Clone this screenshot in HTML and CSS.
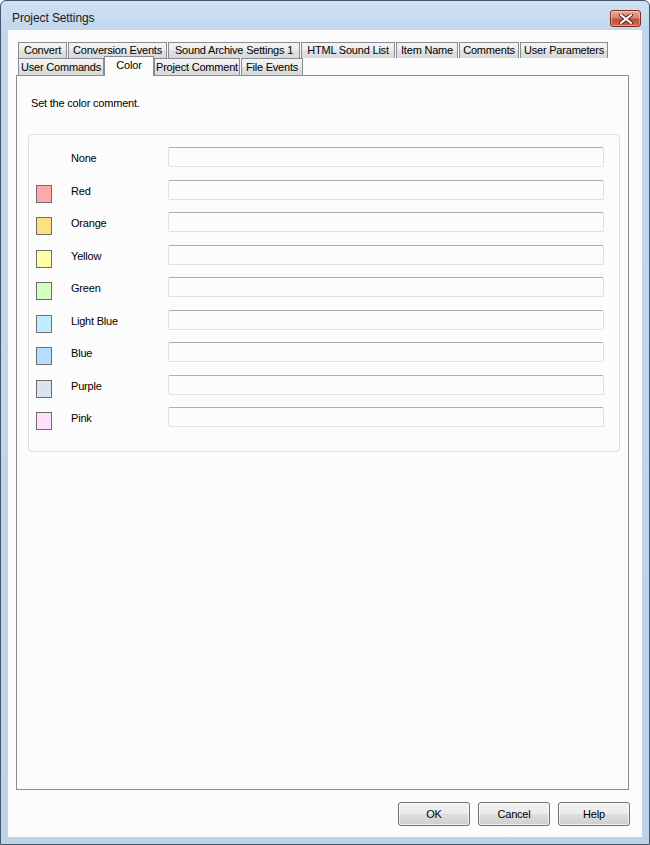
FILE: index.html
```html
<!DOCTYPE html>
<html>
<head>
<meta charset="utf-8">
<link rel="stylesheet" href="styles.css">
</head>
<body>
<div class="window">
  <div class="titlebar">
    <span class="title">Project Settings</span>
    <span class="close"><svg width="14" height="10" viewBox="0 0 14 10"><path d="M2 1 L12 9 M12 1 L2 9" stroke="#5a2020" stroke-width="4" stroke-linecap="square"/><path d="M2 1 L12 9 M12 1 L2 9" stroke="#ffffff" stroke-width="2" stroke-linecap="square"/></svg></span>
  </div>
  <div class="client">
    <div class="tabstrip">
      <div class="tabrow back">
        <div class="tab w49">Convert</div>
        <div class="tab w99">Conversion Events</div>
        <div class="tab w132">Sound Archive Settings 1</div>
        <div class="tab w94">HTML Sound List</div>
        <div class="tab w62">Item Name</div>
        <div class="tab w60">Comments</div>
        <div class="tab w88">User Parameters</div>
      </div>
      <div class="tabrow front">
        <div class="tab w86">User Commands</div>
        <div class="tab selected w48">Color</div>
        <div class="tab w86">Project Comment</div>
        <div class="tab w62">File Events</div>
      </div>
    </div>
    <div class="panel">
      <p class="hint">Set the color comment.</p>
      <div class="group">
        <div class="row"><span class="swatch none"></span><span class="label">None</span><span class="input"></span></div>
        <div class="row"><span class="swatch red"></span><span class="label">Red</span><span class="input"></span></div>
        <div class="row"><span class="swatch orange"></span><span class="label">Orange</span><span class="input"></span></div>
        <div class="row"><span class="swatch yellow"></span><span class="label">Yellow</span><span class="input"></span></div>
        <div class="row"><span class="swatch green"></span><span class="label">Green</span><span class="input"></span></div>
        <div class="row"><span class="swatch lightblue"></span><span class="label">Light Blue</span><span class="input"></span></div>
        <div class="row"><span class="swatch blue"></span><span class="label">Blue</span><span class="input"></span></div>
        <div class="row"><span class="swatch purple"></span><span class="label">Purple</span><span class="input"></span></div>
        <div class="row"><span class="swatch pink"></span><span class="label">Pink</span><span class="input"></span></div>
      </div>
    </div>
    <div class="buttons">
      <button class="btn">OK</button>
      <button class="btn">Cancel</button>
      <button class="btn">Help</button>
    </div>
  </div>
</div>
</body>
</html>
```
FILE: styles.css
```css
* { box-sizing: border-box; }
html, body { margin: 0; padding: 0; }
body {
  width: 650px;
  height: 845px;
  background: #ffffff;
  font-family: "Liberation Sans", Arial, sans-serif;
  font-size: 11px;
  letter-spacing: -0.2px;
  color: #000;
}
.window {
  width: 650px;
  height: 845px;
  border: 1px solid #43566b;
  border-radius: 6px 6px 0 0;
  background: linear-gradient(180deg, #cfe0f2 0px, #c2d7ed 30px, #bdd3ea 100%);
  display: flex;
  flex-direction: column;
  padding: 0 7px 7px 7px;
  overflow: hidden;
}
.titlebar {
  height: 29px;
  flex: none;
  display: flex;
  align-items: flex-start;
  justify-content: space-between;
}
.title {
  margin-top: 10px;
  margin-left: 4px;
  font-size: 12px;
  color: #1a1a1a;
  letter-spacing: -0.1px;
}
.close {
  margin-top: 9px;
  margin-right: 1px;
  width: 31px;
  height: 17px;
  border: 1px solid #7d2f24;
  border-radius: 3px;
  background: linear-gradient(180deg, #e9a997 0%, #d98370 45%, #c3513c 55%, #c8664c 100%);
  display: flex;
  align-items: center;
  justify-content: center;
  box-shadow: inset 0 0 0 1px rgba(255,255,255,0.35);
}
.client {
  flex: 1;
  background: #fcfcfc;
  display: flex;
  flex-direction: column;
  padding: 12px 12px 11px 8px;
}
.tabstrip {
  height: 33px;
  flex: none;
  display: flex;
  flex-direction: column;
}
.tabrow {
  display: flex;
  gap: 1px;
  padding-left: 2px;
}
.tabrow.back { height: 16px; }
.tabrow.front { height: 17px; }
.tab {
  border: 1px solid #898c95;
  border-bottom: none;
  background: linear-gradient(180deg, #f4f4f4 0%, #ececec 45%, #e0e0e0 55%, #dadada 100%);
  text-align: center;
  line-height: 15px;
  white-space: nowrap;
  color: #000;
}
.tabrow.front .tab { line-height: 16px; }
.tab.selected {
  position: relative;
  z-index: 2;
  background: #fcfcfc;
  margin-top: -2px;
  height: 20px;
  margin-left: -1px;
  margin-right: -1px;
  line-height: 15px;
}
.w49 { width: 49px; }
.w99 { width: 99px; }
.w132 { width: 132px; }
.w94 { width: 94px; }
.w62 { width: 62px; }
.w60 { width: 60px; }
.w88 { width: 88px; }
.w86 { width: 86px; }
.w48 { width: 50px; }
.panel {
  flex: 1;
  margin-right: 1px;
  border: 1px solid #898c95;
  background: #fcfcfc;
  padding: 0 8px 0 11px;
  display: flex;
  flex-direction: column;
}
.hint {
  margin: 20px 0 0 3px;
  line-height: 15px;
}
.group {
  margin-top: 23px;
  border: 1px solid #d5dfe5;
  border-radius: 4px;
  padding: 12px 15px 24px 7px;
  display: flex;
  flex-direction: column;
  gap: 12.5px;
}
.row {
  display: flex;
  align-items: flex-start;
  height: 20px;
}
.swatch {
  width: 16px;
  height: 18px;
  margin-top: 5px;
  border: 1px solid #6d6d6d;
  flex: none;
}
.swatch.none { border-color: transparent; }
.red { background: #ffa8a8; }
.orange { background: #ffe080; }
.yellow { background: #ffffa8; }
.green { background: #d4ffc4; }
.lightblue { background: #c4ecff; }
.blue { background: #b8dcff; }
.purple { background: #d8e4f0; }
.pink { background: #ffe0ff; }
.label {
  margin-left: 19px;
  width: 97px;
  line-height: 20px;
  padding-top: 1px;
  flex: none;
}
.input {
  flex: 1;
  height: 20px;
  border: 1px solid #dde2e8;
  border-top-color: #abadb3;
  border-radius: 2px;
  background: #fcfcfc;
}
.buttons {
  margin-top: 12px;
  height: 24px;
  flex: none;
  display: flex;
  justify-content: flex-end;
  gap: 8px;
}
.btn {
  width: 72px;
  height: 24px;
  border: 1px solid #707070;
  border-radius: 3px;
  background: linear-gradient(180deg, #f2f2f2 0%, #ebebeb 48%, #dddddd 52%, #cfcfcf 100%);
  box-shadow: inset 0 0 0 1px rgba(255,255,255,0.7);
  font-family: "Liberation Sans", Arial, sans-serif;
  font-size: 11px;
  letter-spacing: -0.2px;
  color: #000;
  padding: 0;
}
```
